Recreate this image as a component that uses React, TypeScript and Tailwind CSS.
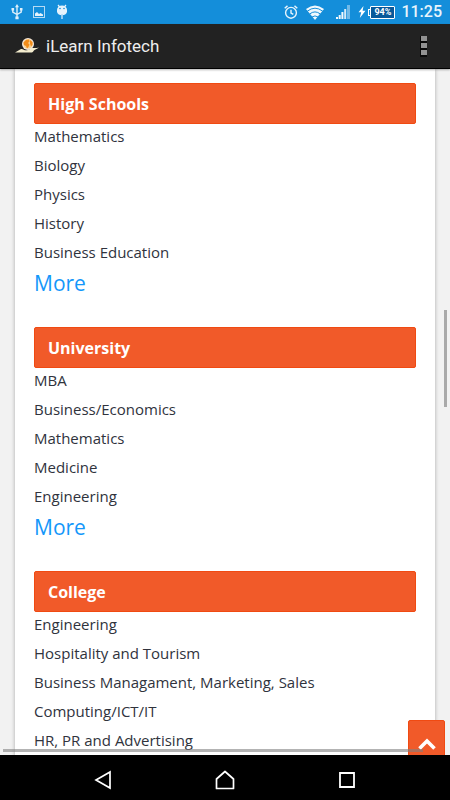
type Section = { title: string; items: string[]; more?: string };

const sections: Section[] = [
  {
    title: "High Schools",
    items: ["Mathematics", "Biology", "Physics", "History", "Business Education"],
    more: "#high-schools",
  },
  {
    title: "University",
    items: ["MBA", "Business/Economics", "Mathematics", "Medicine", "Engineering"],
    more: "#university",
  },
  {
    title: "College",
    items: [
      "Engineering",
      "Hospitality and Tourism",
      "Business Managament, Marketing, Sales",
      "Computing/ICT/IT",
      "HR, PR and Advertising",
    ],
  },
];

function UsbIcon() {
  return (
    <svg width="12" height="16" viewBox="0 0 12 16" fill="none" stroke="#dff0fb" strokeWidth="1.4">
      <path d="M6 2v12M1.800 5v3.200L6 10.500l4.200-2.300V5" />
      <path d="M6 0l2 3.200H4zM4.400 12.500h3.200v2.700H4.400zM.5 4h2.600v2.600H.5zM8.900 4h2.600v2.600H8.900z" fill="#dff0fb" stroke="none" />
    </svg>
  );
}

function PictureIcon() {
  return (
    <svg width="12" height="12" viewBox="0 0 12 12">
      <rect x=".5" y=".5" width="11" height="11" fill="none" stroke="#b5daf4" />
      <path d="M2 10V7.500l2-1.500 2 2 1.500-1L10 8.500V10z" fill="#e6f3fc" />
    </svg>
  );
}

function AndroidIcon() {
  return (
    <svg width="12" height="16" viewBox="0 0 12 16">
      <path d="M2 1l1.700 2M10 1L8.300 3" stroke="#e6f3fc" strokeWidth="1.200" />
      <path d="M1 6a5 4.500 0 0 1 10 0v1.500a5 3.800 0 0 1-10 0z" fill="#e6f3fc" />
      <path d="M5.200 10h1.600v5H5.200z" fill="#b5daf4" />
      <circle cx="4" cy="4.500" r=".8" fill="#148eda" />
      <circle cx="8" cy="4.500" r=".8" fill="#148eda" />
    </svg>
  );
}

function AlarmIcon() {
  return (
    <svg width="14" height="14" viewBox="0 0 14 14" fill="none" stroke="#e8f4fc" strokeWidth="1.400">
      <circle cx="7" cy="7.800" r="5.400" />
      <path d="M7 4.800v3.200l2.300 1.400M.7 3.300L3.500.9M13.300 3.300L10.500.9" />
    </svg>
  );
}

function WifiIcon() {
  return (
    <svg width="18" height="15" viewBox="0 0 18 15">
      <path d="M0 4Q9-3 18 4L9 15z" fill="#f0f8fd" />
      <path d="M1.300 6.200Q9 .2 16.700 6.200M3.600 9Q9 4.800 14.400 9M6 12Q9 9.800 12 12" fill="none" stroke="#148eda" strokeWidth="1" />
    </svg>
  );
}

function SignalIcon() {
  return (
    <svg width="14" height="14" viewBox="0 0 14 14">
      <path d="M0 12h2v2H0zM2.700 10h2v4h-2zM5.400 7h2v7h-2z" fill="#f0f8fd" />
      <path d="M8.200 4h2v10h-2z" fill="#d5eaf8" />
      <path d="M11 0h3v14h-3z" fill="#72bae8" />
    </svg>
  );
}

function BoltIcon() {
  return (
    <svg width="8" height="12" viewBox="0 0 8 12">
      <path d="M5.500 0L.5 6.300h2.700L1.800 12 7.500 4.700H4.600z" fill="#fff" />
    </svg>
  );
}

function StatusBar() {
  return (
    <div className="flex h-6 shrink-0 items-center bg-[#148eda] pr-2 pl-[11px] font-['Roboto',sans-serif] text-white">
      <UsbIcon />
      <span className="ml-[10px]"><PictureIcon /></span>
      <span className="ml-[11px]"><AndroidIcon /></span>
      <span className="ml-auto"><AlarmIcon /></span>
      <span className="ml-2"><WifiIcon /></span>
      <span className="ml-3"><SignalIcon /></span>
      <span className="ml-2"><BoltIcon /></span>
      <span className="ml-[2px] h-[7px] w-[2px] border border-r-0 border-white" />
      <span className="flex h-[13px] w-[25px] items-center justify-center rounded-[1px] border border-white bg-[#08599a] text-[9px] leading-none font-bold">
        94%
      </span>
      <span className="ml-[6px] text-base leading-6 font-medium text-[#e9f5fc]">11:25</span>
    </div>
  );
}

function Logo() {
  return (
    <svg width="24" height="16" viewBox="0 0 24 16">
      <circle cx="13" cy="6" r="6" fill="#f5e8dc" />
      <circle cx="13" cy="5.800" r="4.800" fill="#fad08c" />
      <path d="M8.500 4.500L11 2l3-.5.5 2-1.500 1.500 1.500 1.500-1 2.500-1.500 1.500-1-2.500-2-1zM15 2l2.500 2v3L16 8.500l-1-3z" fill="#f28c1a" />
      <path d="M0 14.500l6-3.500c2-.6 3 1.500 6 1.200 3-.2 3-2.200 5.500-2.200 2 0 4 .2 6.500-.5-2 1.500-4.500 1.800-5.500 3.500-.5 1-1.500 1.500-2.500 1.500z" fill="#f4edcf" />
    </svg>
  );
}

function AppBar() {
  return (
    <header className="z-10 flex h-[45px] shrink-0 items-center border-b border-black bg-[#222] pr-[23px] pl-[15px] shadow-[0_1px_2px_rgba(0,0,0,0.3)]">
      <Logo />
      <h1 className="ml-[7px] font-['Roboto',sans-serif] text-[17px] leading-6 text-[#eee]">iLearn Infotech</h1>
      <button type="button" aria-label="More options" className="ml-auto flex flex-col">
        <span className="size-[7px] border-b-2 border-l border-[#090909] bg-[#929292]" />
        <span className="size-[7px] border-b-2 border-l border-[#090909] bg-[#929292]" />
        <span className="size-[7px] border-b-2 border-l border-[#090909] bg-[#929292]" />
      </button>
    </header>
  );
}

function SubjectSection({ title, items, more }: Section) {
  return (
    <section className="mb-[29px]">
      <h2 className="rounded-[2px] border border-[#f04a12] bg-[#f15a29] px-[13px] pt-2 pb-[7px] text-base leading-6 font-bold text-white">
        {title}
      </h2>
      <ul>
        {items.map((item) => (
          <li key={item} className="pb-[5px] text-[15px] leading-6 text-[#30333d]">{item}</li>
        ))}
      </ul>
      {more && <a href={more} className="block text-[21px] leading-[29px] text-[#1497fa]">More</a>}
    </section>
  );
}

function NavBar() {
  return (
    <nav className="flex h-[45px] shrink-0 justify-center bg-black">
      <button type="button" aria-label="Back" className="flex w-[122px] items-center justify-center pt-1">
        <svg width="18" height="20" viewBox="0 0 18 20" fill="none" stroke="#fff" strokeWidth="1.700">
          <path d="M16 2L2 10 16 18z" />
        </svg>
      </button>
      <button type="button" aria-label="Home" className="flex w-[122px] items-center justify-center pt-1">
        <svg width="20" height="20" viewBox="0 0 20 20" fill="none" stroke="#fff" strokeWidth="1.700" strokeLinejoin="round">
          <path d="M1.500 9L10 1.500 18.500 9v9.500h-17z" />
        </svg>
      </button>
      <button type="button" aria-label="Recent apps" className="flex w-[122px] items-center justify-center pt-1">
        <svg width="16" height="16" viewBox="0 0 16 16" fill="none" stroke="#fff" strokeWidth="1.800">
          <path d="M1 1h14v14H1z" />
        </svg>
      </button>
    </nav>
  );
}

export default function App() {
  return (
    <div className="flex h-screen flex-col bg-black">
      <StatusBar />
      <AppBar />
      <div className="relative flex-1 overflow-hidden bg-[#f2f2f2]">
        <main className="mx-[15px] bg-white px-[19px] pt-[14px] font-['Open_Sans',sans-serif] shadow-[0_0_4px_rgba(0,0,0,0.3)]">
          {sections.map((section) => (
            <SubjectSection key={section.title} {...section} />
          ))}
        </main>
        <button
          type="button"
          aria-label="Back to top"
          className="absolute right-[5px] -bottom-2 flex h-[43px] w-[37px] items-center justify-center rounded-[2px] border border-[#f04a12] bg-[#f15a29] pt-1"
        >
          <svg width="18" height="12" viewBox="0 0 18 12" fill="none" stroke="#fff" strokeWidth="3.600">
            <path d="M1.500 10.500L9 3l7.500 7.500" />
          </svg>
        </button>
        <div className="absolute top-[241px] right-[3px] h-[97px] w-[3px] bg-[#aaa]" />
        <div className="absolute right-[27px] bottom-[3px] left-[3px] h-[3px] bg-[#808080]/60" />
      </div>
      <NavBar />
    </div>
  );
}
